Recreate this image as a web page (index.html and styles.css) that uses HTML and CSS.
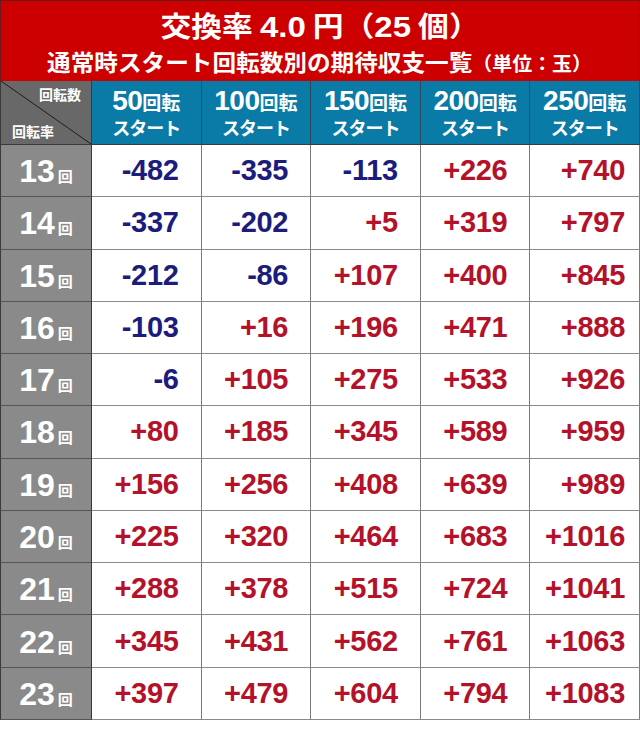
FILE: index.html
```html
<!DOCTYPE html>
<html lang="ja">
<head>
<meta charset="utf-8">
<link rel="stylesheet" href="styles.css">
</head>
<body>
<div class="page">
  <div class="title">
    <div class="t1">交換率 <span class="num">4.0</span> 円（<span class="num">25</span> 個）</div>
    <div class="t2">通常時スタート回転数別の期待収支一覧<span class="unit">（単位：玉）</span></div>
  </div>
  <div class="grid" id="grid">
    <div class="corner"><span class="c-top">回転数</span><span class="c-bot">回転率</span></div>
    <div class="head"><div><span class="hn">50</span>回転</div><div>スタート</div></div>
    <div class="head"><div><span class="hn">100</span>回転</div><div>スタート</div></div>
    <div class="head"><div><span class="hn">150</span>回転</div><div>スタート</div></div>
    <div class="head"><div><span class="hn">200</span>回転</div><div>スタート</div></div>
    <div class="head last"><div><span class="hn">250</span>回転</div><div>スタート</div></div>

    <div class="lab">13<span class="kai">回</span></div>
    <div class="v neg">-482</div><div class="v neg">-335</div><div class="v neg">-113</div><div class="v pos">+226</div><div class="v pos last">+740</div>

    <div class="lab">14<span class="kai">回</span></div>
    <div class="v neg">-337</div><div class="v neg">-202</div><div class="v pos">+5</div><div class="v pos">+319</div><div class="v pos last">+797</div>

    <div class="lab">15<span class="kai">回</span></div>
    <div class="v neg">-212</div><div class="v neg">-86</div><div class="v pos">+107</div><div class="v pos">+400</div><div class="v pos last">+845</div>

    <div class="lab">16<span class="kai">回</span></div>
    <div class="v neg">-103</div><div class="v pos">+16</div><div class="v pos">+196</div><div class="v pos">+471</div><div class="v pos last">+888</div>

    <div class="lab">17<span class="kai">回</span></div>
    <div class="v neg">-6</div><div class="v pos">+105</div><div class="v pos">+275</div><div class="v pos">+533</div><div class="v pos last">+926</div>

    <div class="lab">18<span class="kai">回</span></div>
    <div class="v pos">+80</div><div class="v pos">+185</div><div class="v pos">+345</div><div class="v pos">+589</div><div class="v pos last">+959</div>

    <div class="lab">19<span class="kai">回</span></div>
    <div class="v pos">+156</div><div class="v pos">+256</div><div class="v pos">+408</div><div class="v pos">+639</div><div class="v pos last">+989</div>

    <div class="lab">20<span class="kai">回</span></div>
    <div class="v pos">+225</div><div class="v pos">+320</div><div class="v pos">+464</div><div class="v pos">+683</div><div class="v pos last">+1016</div>

    <div class="lab">21<span class="kai">回</span></div>
    <div class="v pos">+288</div><div class="v pos">+378</div><div class="v pos">+515</div><div class="v pos">+724</div><div class="v pos last">+1041</div>

    <div class="lab">22<span class="kai">回</span></div>
    <div class="v pos">+345</div><div class="v pos">+431</div><div class="v pos">+562</div><div class="v pos">+761</div><div class="v pos last">+1063</div>

    <div class="lab">23<span class="kai">回</span></div>
    <div class="v pos">+397</div><div class="v pos">+479</div><div class="v pos">+604</div><div class="v pos">+794</div><div class="v pos last">+1083</div>
  </div>
</div>
</body>
</html>
```

FILE: styles.css
```css
html, body {
  margin: 0;
  padding: 0;
  background: #ffffff;
}
.page {
  width: 640px;
  font-family: "Noto Sans CJK JP", "Liberation Sans", sans-serif;
  font-weight: 700;
}
.title {
  box-sizing: border-box;
  height: 81px;
  background: #cc0000;
  border: 1px solid #6a1a1a;
  border-bottom: none;
  color: #ffffff;
  text-align: center;
  display: flex;
  flex-direction: column;
  align-items: center;
  padding-top: 5px;
}
.t1 {
  font-size: 28px;
  line-height: 38px;
  transform: scaleX(1.1);
  white-space: nowrap;
}
.t1 .num {
  font-family: "Liberation Sans", sans-serif;
  font-size: 30px;
}
.t2 {
  font-size: 22.5px;
  line-height: 30px;
  transform: scaleX(1.05);
  white-space: nowrap;
}
.t2 .unit {
  font-size: 19px;
}
.grid {
  display: grid;
  grid-template-columns: 92px repeat(5, 1fr);
  grid-template-rows: 64px repeat(11, 52.27px);
  width: 640px;
}
.grid > div {
  box-sizing: border-box;
  border-right: 1px solid #7a7a7a;
  border-bottom: 1px solid #8a8a8a;
}
.corner {
  background: linear-gradient(to top right, #686868 calc(50% - 0.8px), #1a1a1a 50%, #686868 calc(50% + 0.8px));
  border-left: 1px solid #3a3a3a;
  border-right: 1px solid #3a3a3a !important;
  border-bottom: 1px solid #3a3a3a !important;
  color: #ffffff;
  font-size: 14px;
  line-height: 16px;
  display: flex;
  flex-direction: column;
  justify-content: space-between;
  padding: 5px 10px 5px 11px;
}
.c-top { align-self: flex-end; }
.c-bot { align-self: flex-start; }
.head {
  background: #0a7aa6;
  color: #ffffff;
  display: flex;
  flex-direction: column;
  align-items: center;
  justify-content: center;
  font-size: 19px;
  line-height: 26px;
  border-right: 1px solid #2a4a5a !important;
  border-bottom: 1px solid #3a3a3a !important;
  padding-top: 1px;
}
.head > div:last-child {
  font-size: 18px;
  line-height: 24px;
  letter-spacing: -1px;
}
.head .hn {
  font-family: "Liberation Sans", sans-serif;
  font-size: 28px;
  letter-spacing: -0.5px;
}
.lab {
  background: #8a8a8a;
  border-left: 1px solid #3a3a3a;
  border-right: 1px solid #3a3a3a !important;
  border-bottom: 1px solid #555555 !important;
  color: #ffffff;
  display: flex;
  align-items: center;
  justify-content: center;
  font-family: "Liberation Sans", sans-serif;
  font-size: 32px;
  padding-top: 2px;
}
.kai {
  font-family: "Noto Sans CJK JP", sans-serif;
  font-size: 15px;
  margin-left: 3px;
  padding-top: 8px;
}
.v {
  background: #ffffff;
  display: flex;
  align-items: center;
  justify-content: flex-end;
  padding-right: 22px;
  font-family: "Liberation Sans", sans-serif;
  font-size: 29px;
  letter-spacing: -0.3px;
}
.v.last { padding-right: 14px; }
.neg { color: #1c1c7c; }
.pos { color: #b3122a; }
.grid > .last { border-right: 1px solid #7a7a7a; }
```
